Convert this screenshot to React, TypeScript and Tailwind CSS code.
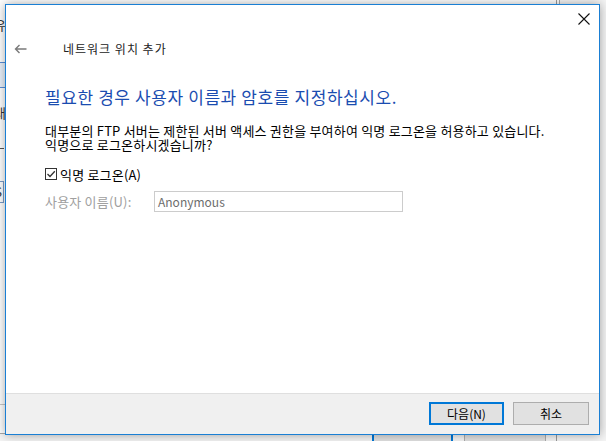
import React from "react";

const font = { fontFamily: '"Noto Sans CJK KR", "Noto Sans", sans-serif' };

function CloseIcon() {
  return (
    <svg width="12" height="12" viewBox="0 0 12 12" className="block">
      <path d="M0.5 0.5 L11.5 11.5 M11.5 0.5 L0.5 11.5" stroke="#111" strokeWidth="1.1" fill="none" />
    </svg>
  );
}

function BackArrow() {
  return (
    <svg width="13" height="10" viewBox="0 0 13 10" className="block">
      <path d="M12.5 5 H1.5 M5.5 1 L1.5 5 L5.5 9" stroke="#7a7a7a" strokeWidth="1.4" fill="none" />
    </svg>
  );
}

export default function App() {
  return (
    <div className="relative w-[606px] h-[441px] overflow-hidden bg-[#f4f4f4]" style={font}>
      {/* background window (desktop behind the dialog) */}
      <div className="absolute left-[-40px] top-[-10px] w-[600px] h-[444px] bg-white border-r border-b border-[#a8a8a8]">
        <div className="absolute left-[34px] top-[28px] text-[13px] text-[#333] leading-none">유</div>
        <div className="absolute left-[20px] top-[72px] w-[26px] h-[26px] border border-[#5b8fd6] bg-[#e9f1fb]"></div>
        <div className="absolute left-[34px] top-[116px] text-[13px] text-[#333] leading-none">내</div>
        <div className="absolute left-[40px] top-[158px] w-[4px] h-[1px] bg-[#555]"></div>
        <div className="absolute left-[10px] top-[191px] w-[34px] h-[22px] border border-[#7a9cc8] text-[13px] text-[#333] leading-[20px] text-right pr-[1px]">S</div>
        <div className="absolute left-[0px] top-[414px] w-[600px] h-[1px] bg-[#c8c8c8]"></div>
        <div className="absolute left-[596px] top-[0px] w-[1px] h-[444px] bg-[#9a9a9a]"></div>
      </div>
      <div className="absolute left-[372px] top-[433px] w-[81px] h-[20px] border-2 border-[#0078d7] bg-[#e1e1e1]"></div>
      <div className="absolute left-[464px] top-[433px] w-[82px] h-[20px] border border-[#adadad] bg-[#e1e1e1]"></div>
      <div className="absolute left-[556px] top-[0px] w-[1px] h-[441px] bg-[#9a9a9a]"></div>

      {/* dialog */}
      <div className="absolute left-[5px] top-[4px] w-[595px] h-[431px] border border-[#1a7fd4] bg-white flex flex-col shadow-[0_0_10px_rgba(0,0,0,0.35)]">
        <div className="h-[30px] flex justify-end items-start pt-[8px] pr-[9px]">
          <CloseIcon />
        </div>
        <div className="h-[27px] flex items-center pl-[8px]">
          <BackArrow />
          <span className="ml-[36px] text-[12px] tracking-[1px] leading-none text-[#222]">네트워크 위치 추가</span>
        </div>
        <div className="mt-[23px] pl-[39px] text-[17px] tracking-[0.6px] leading-[24px] text-[#1a4cb0]">
          필요한 경우 사용자 이름과 암호를 지정하십시오.
        </div>
        <div className="mt-[15px] pl-[39px] text-[13px] tracking-[0.2px] leading-[14px] text-black">
          <div>대부분의 FTP 서버는 제한된 서버 액세스 권한을 부여하여 익명 로그온을 허용하고 있습니다.</div>
          <div>익명으로 로그온하시겠습니까?</div>
        </div>
        <div className="mt-[14px] pl-[39px] h-[16px] flex items-center">
          <div className="w-[12px] h-[12px] border border-[#333] flex items-center justify-center">
            <svg width="10" height="10" viewBox="0 0 10 10" className="block">
              <path d="M1.5 5 L4 7.5 L8.8 2.2" stroke="#333" strokeWidth="1.3" fill="none" />
            </svg>
          </div>
          <span className="ml-[3px] text-[13px] tracking-[0.2px] leading-none text-black">익명 로그온(A)</span>
        </div>
        <div className="mt-[9px] pl-[39px] flex items-center">
          <span className="w-[109px] text-[13px] tracking-[0.2px] leading-none text-[#a0a0a0]">사용자 이름(U):</span>
          <div className="w-[249px] h-[21px] border border-[#cccccc] flex items-center pl-[3px] text-[12px] leading-none text-[#6d6d6d]">
            Anonymous
          </div>
        </div>
        <div className="flex-1"></div>
        <div className="h-[41px] border-t border-[#dfdfdf] bg-[#f0f0f0] flex justify-end items-start pt-[8px] pr-[10px] gap-[9px]">
          <div className="w-[75px] h-[23px] border-2 border-[#0078d7] bg-[#e1e1e1] flex items-center justify-center text-[12px] leading-none text-black">
            다음(N)
          </div>
          <div className="w-[76px] h-[23px] border border-[#adadad] bg-[#e1e1e1] flex items-center justify-center text-[12px] leading-none text-black">
            취소
          </div>
        </div>
      </div>
    </div>
  );
}
